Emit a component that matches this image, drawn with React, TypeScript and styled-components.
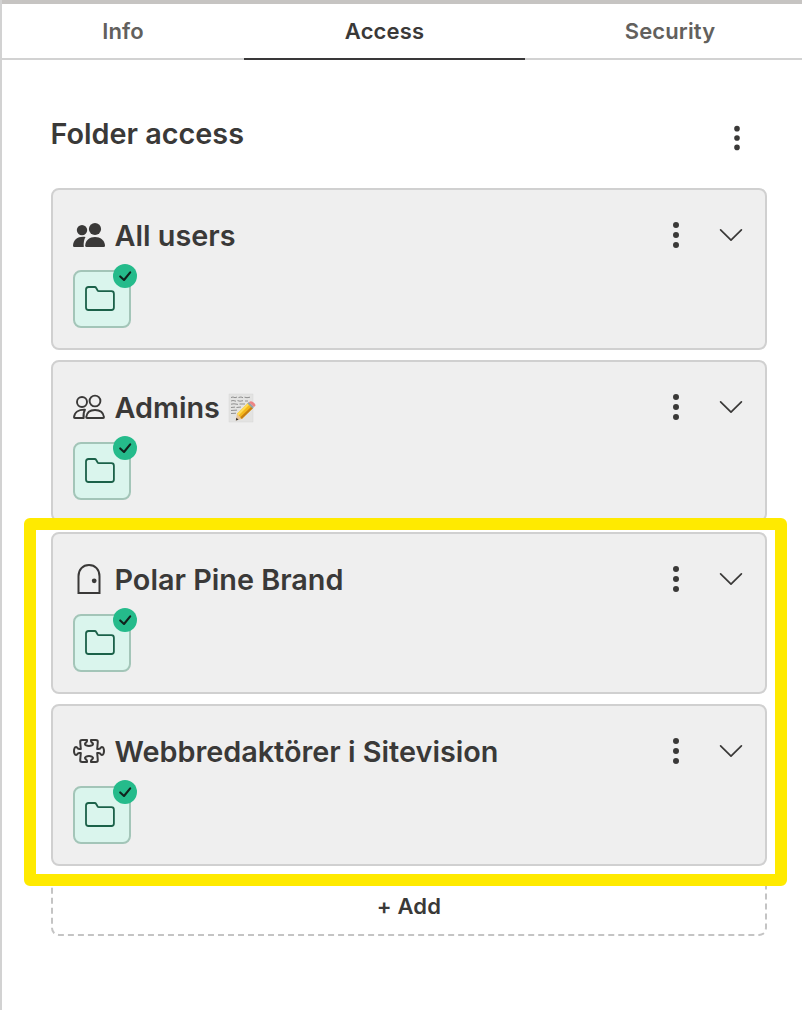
import React from 'react';
import styled, { createGlobalStyle } from 'styled-components';
import { BsPuzzle, BsThreeDotsVertical } from 'react-icons/bs';

const GlobalStyle = createGlobalStyle`
  *, *::before, *::after { box-sizing: border-box; }
  body {
    margin: 0;
    background: #fff;
    color: #3a3938;
    font-family: Inter, 'Liberation Sans', sans-serif;
    overflow: hidden;
  }
  button {
    font: inherit;
    color: inherit;
    background: none;
    border: 0;
    padding: 0;
    cursor: pointer;
  }
  svg { display: block; flex: none; }
`;

const Panel = styled.main`
  position: relative;
  width: 802px;
  height: 1010px;
  overflow: hidden;
  border-left: 2px solid #d2d2d2;
  background: #fff;
`;

const TabBar = styled.nav`
  display: grid;
  grid-template-columns: 242px 281px 290px;
  width: 813px;
  height: 60px;
  border-top: 4px solid #c6c4c2;
`;

const Tab = styled.button<{ $active?: boolean }>`
  height: 56px;
  padding-bottom: 1px;
  border-bottom: 2px solid ${(p) => (p.$active ? '#393839' : '#d2d2d2')};
  color: ${(p) => (p.$active ? '#3a3938' : '#62605d')};
  font-size: 22px;
  font-weight: 600;
  letter-spacing: 0.14px;
`;

const Content = styled.section`
  padding: 50px 35px 0 49px;
`;

const Header = styled.header`
  display: flex;
  align-items: center;
  justify-content: space-between;
  height: 48px;
  margin-bottom: 30px;
  padding-right: 15px;
`;

const Heading = styled.h1`
  margin: 0 0 0 -0.5px;
  font-size: 28.8px;
  line-height: 48px;
  font-weight: 600;
`;

const HeaderMenu = styled.button`
  margin-top: 8px;
`;

const List = styled.div`
  display: flex;
  flex-direction: column;
  gap: 10px;
`;

const Card = styled.article`
  height: 162px;
  padding: 26px 18px 0 20px;
  border: 2px solid #d0d0d0;
  border-radius: 8px;
  background: #efefef;
`;

const CardHeader = styled.div`
  display: flex;
  align-items: center;
  height: 40px;
`;

const CardTitle = styled.h2`
  flex: 1;
  display: flex;
  align-items: center;
  gap: 8.5px;
  margin: 0 0 0 9.5px;
  font-size: 28.8px;
  line-height: 40px;
  font-weight: 600;
  white-space: nowrap;
`;

const Actions = styled.div`
  display: flex;
  align-items: center;
  gap: 23px;
  margin-top: -2px;
`;

const Permission = styled.div`
  position: relative;
  display: flex;
  width: 58px;
  height: 58px;
  margin-top: 14px;
  padding: 14px 0 0 10px;
  border: 2px solid #a3c5b8;
  border-radius: 8px;
  background: #daf5ed;
`;

const CheckBadge = styled.span`
  position: absolute;
  top: -8px;
  right: -8px;
  width: 24px;
  height: 24px;
  border-radius: 50%;
  background: #25bb8b;
`;

const AddButton = styled.button`
  height: 60px;
  border: 2px dashed #c4c4c4;
  border-radius: 8px;
  font-size: 22px;
  font-weight: 600;
  letter-spacing: 0.2px;
`;

const Highlight = styled.div`
  position: absolute;
  top: 518px;
  left: 22px;
  width: 763px;
  height: 368px;
  border: 12px solid #ffea00;
  border-radius: 6px;
  pointer-events: none;
`;

const PuzzleIcon = styled(BsPuzzle)`
  margin-top: -2px;
`;

const UsersIcon = ({ filled }: { filled?: boolean }) => (
  <svg
    width="32"
    height="32"
    viewBox="0 0 32 32"
    fill={filled ? 'currentColor' : 'none'}
    stroke={filled ? 'none' : 'currentColor'}
    strokeWidth="1.9"
    strokeLinejoin="round"
  >
    {filled ? (
      <>
        <circle cx="9" cy="10.1" r="5.2" />
        <circle cx="22" cy="9" r="6.1" />
        <path d="M12.5 17C5.5 16 .5 19 0 25.5Q0 27 1.3 27H10.8C10.4 23 11 19.5 12.5 17Z" />
        <path d="M12.2 25.5C12.6 20 16.5 17 22 17S31.5 20 32 25.5Q32 27 30.7 27H13.5Q12.2 27 12.2 25.5Z" />
      </>
    ) : (
      <>
        <circle cx="9" cy="10" r="5" />
        <circle cx="22" cy="9" r="5.4" />
        <path d="M12 17.7C5.6 17.4 1.5 20.4 1 25.2Q1 26 1.8 26H10.7C10.2 22.5 10.4 20 12 17.7Z" />
        <path d="M13.2 25.1C13.8 20.5 17 18 22 18S30.3 20.5 31 25.1Q31 26 30.2 26H14Q13.2 26 13.2 25.1Z" />
      </>
    )}
  </svg>
);

const DoorIcon = () => (
  <svg width="32" height="32" viewBox="0 0 32 32" fill="none" stroke="currentColor" strokeWidth="2">
    <path d="M5.5 29V12.3C5.5 5.5 9.8 1 16 1S26.5 5.5 26.5 12.3V29Z" />
    <circle cx="21.2" cy="16.8" r="2.4" fill="currentColor" stroke="none" />
  </svg>
);

const ChevronIcon = () => (
  <svg width="32" height="32" viewBox="0 0 32 32" fill="none" stroke="currentColor" strokeWidth="1.7" strokeLinecap="round" strokeLinejoin="round">
    <path d="M5.6 10.8L16 21.2L26.4 10.8" />
  </svg>
);

const FolderIcon = () => (
  <svg width="30" height="26" viewBox="0 0 30 26" fill="none" stroke="#1b6149" strokeWidth="1.8" strokeLinejoin="round">
    <path d="M1 3.5Q1 1 3.5 1H9.6Q10.7 1 11.2 2L12.5 4.3Q12.9 5.2 14 5.2H26.4Q28.9 5.2 28.9 7.7V21.5Q28.9 24 26.4 24H3.5Q1 24 1 21.5Z" />
  </svg>
);

const CheckIcon = () => (
  <svg width="24" height="24" viewBox="0 0 24 24" fill="none" stroke="#10231d" strokeWidth="2.1" strokeLinecap="round" strokeLinejoin="round">
    <path d="M7.2 12.4L11 16L17.2 8.3" />
  </svg>
);

const MemoIcon = () => (
  <svg width="28" height="30" viewBox="0 0 28 30">
    <rect x="1" y="1" width="24" height="28" fill="#e3e3e2" stroke="#d6d6d5" strokeWidth=".5" />
    <path
      d="M3 4.5L5 4L7 4.7L9 4.1M10.5 4.5L13 4L15 4.7M16.5 4.2L19 4.7L22 4.2M3 8L5 7.5L8 8.2M9.5 7.6L12 8.2L15 7.7M17 8H20M3 11.2L6 10.8L10 11.4M11.5 11H17M3 14.5L7 14.1M8.5 14.5L13 14M3 17.5L9 17.1M3 20.5L8 20.2"
      fill="none"
      stroke="#909090"
      strokeWidth="1"
    />
    <path d="M7.8 27.5L9 20.8L13.8 26Z" fill="#e7c398" />
    <path d="M7.8 27.5L8.4 24.7L10.6 26.8Z" fill="#35312e" />
    <path d="M9 20.8L20 10L25.1 14.9L13.8 26Z" fill="#f4b81c" />
    <path d="M9 20.8L20 10L21.5 11.5L10.5 22.4Z" fill="#ffdb55" />
    <path d="M12.3 24.3L23.6 13.4L25.1 14.9L13.8 26Z" fill="#c88012" />
    <path d="M19.4 10.5L20.9 9.1L26 14L24.6 15.4Z" fill="#94a5a8" />
    <path d="M20.8 9.2L22 8.5Q24 7.8 26.2 10T26.9 13.2L26 14Z" fill="#ed8585" />
  </svg>
);

const groups = [
  { name: 'All users', icon: <UsersIcon filled /> },
  { name: 'Admins', icon: <UsersIcon />, note: <MemoIcon /> },
  { name: 'Polar Pine Brand', icon: <DoorIcon /> },
  { name: 'Webbredaktörer i Sitevision', icon: <PuzzleIcon size={32} /> },
];

export default function App() {
  return (
    <>
      <GlobalStyle />
      <Panel>
        <TabBar>
          <Tab>Info</Tab>
          <Tab $active>Access</Tab>
          <Tab>Security</Tab>
        </TabBar>
        <Content>
          <Header>
            <Heading>Folder access</Heading>
            <HeaderMenu aria-label="Folder options">
              <BsThreeDotsVertical size={30} />
            </HeaderMenu>
          </Header>
          <List>
            {groups.map((group) => (
              <Card key={group.name}>
                <CardHeader>
                  {group.icon}
                  <CardTitle>
                    {group.name}
                    {group.note}
                  </CardTitle>
                  <Actions>
                    <button aria-label="Options">
                      <BsThreeDotsVertical size={32} />
                    </button>
                    <button aria-label="Expand">
                      <ChevronIcon />
                    </button>
                  </Actions>
                </CardHeader>
                <Permission>
                  <FolderIcon />
                  <CheckBadge>
                    <CheckIcon />
                  </CheckBadge>
                </Permission>
              </Card>
            ))}
            <AddButton>+ Add</AddButton>
          </List>
        </Content>
        <Highlight />
      </Panel>
    </>
  );
}
